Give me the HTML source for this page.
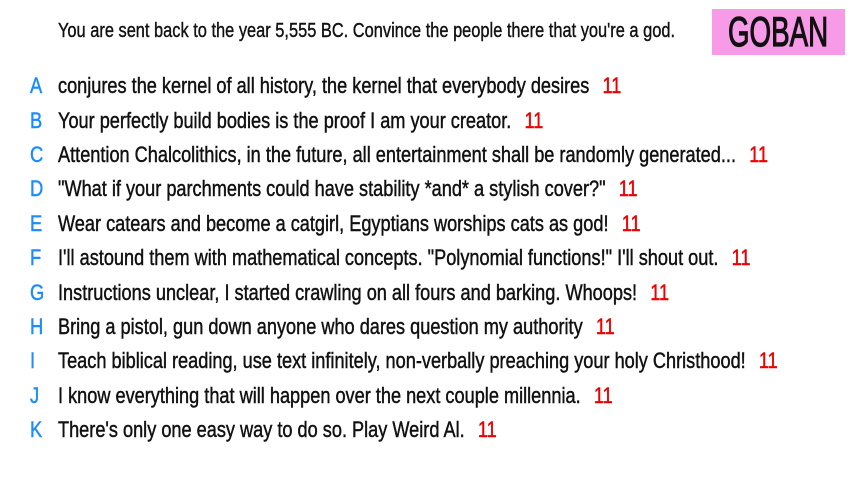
<!DOCTYPE html>
<html><head><meta charset="utf-8"><style>
body{margin:0;width:853px;height:480px;background:#fff;position:relative;overflow:hidden;font-family:"Liberation Sans Narrow","Liberation Sans",sans-serif;color:#111}
.t{position:absolute;left:58px;top:20px;font-size:20px;white-space:nowrap;transform:scaleX(0.82);transform-origin:left;-webkit-text-stroke:0.4px #111}
.g{position:absolute;left:712px;top:9px;width:133px;height:46px;background:#f79ae8}
.g div{position:absolute;left:16px;top:0;font-size:42px;line-height:46px;color:#111;transform:scaleX(0.66);transform-origin:left;white-space:nowrap;-webkit-text-stroke:1.2px #111}
.r{position:absolute;left:0;width:853px;font-size:22px;white-space:nowrap;line-height:24px;-webkit-text-stroke:0.45px #111}
.r b{position:absolute;left:30px;color:#1a8cff;font-weight:normal;transform:scaleX(0.833);transform-origin:left;-webkit-text-stroke:0.45px #1a8cff}
.r span{position:absolute;left:58px;transform:scaleX(0.825);transform-origin:left}
.r i{font-style:normal;color:#e00;margin-left:16px;-webkit-text-stroke:0.45px #e00}
</style></head><body>
<div class="t">You are sent back to the year 5,555 BC. Convince the people there that you're a god.</div>
<div class="g"><div>GOBAN</div></div>
<div class="r" style="top:74px"><b>A</b><span>conjures the kernel of all history, the kernel that everybody desires<i>11</i></span></div>
<div class="r" style="top:109px"><b>B</b><span>Your perfectly build bodies is the proof I am your creator.<i>11</i></span></div>
<div class="r" style="top:143px"><b>C</b><span>Attention Chalcolithics, in the future, all entertainment shall be randomly generated...<i>11</i></span></div>
<div class="r" style="top:177px"><b>D</b><span>"What if your parchments could have stability *and* a stylish cover?"<i>11</i></span></div>
<div class="r" style="top:212px"><b>E</b><span>Wear catears and become a catgirl, Egyptians worships cats as god!<i>11</i></span></div>
<div class="r" style="top:246px"><b>F</b><span>I'll astound them with mathematical concepts. "Polynomial functions!" I'll shout out.<i>11</i></span></div>
<div class="r" style="top:281px"><b>G</b><span>Instructions unclear, I started crawling on all fours and barking. Whoops!<i>11</i></span></div>
<div class="r" style="top:315px"><b>H</b><span>Bring a pistol, gun down anyone who dares question my authority<i>11</i></span></div>
<div class="r" style="top:349px"><b>I</b><span>Teach biblical reading, use text infinitely, non-verbally preaching your holy Christhood!<i>11</i></span></div>
<div class="r" style="top:384px"><b>J</b><span>I know everything that will happen over the next couple millennia.<i>11</i></span></div>
<div class="r" style="top:418px"><b>K</b><span>There's only one easy way to do so. Play Weird Al.<i>11</i></span></div>
</body></html>
